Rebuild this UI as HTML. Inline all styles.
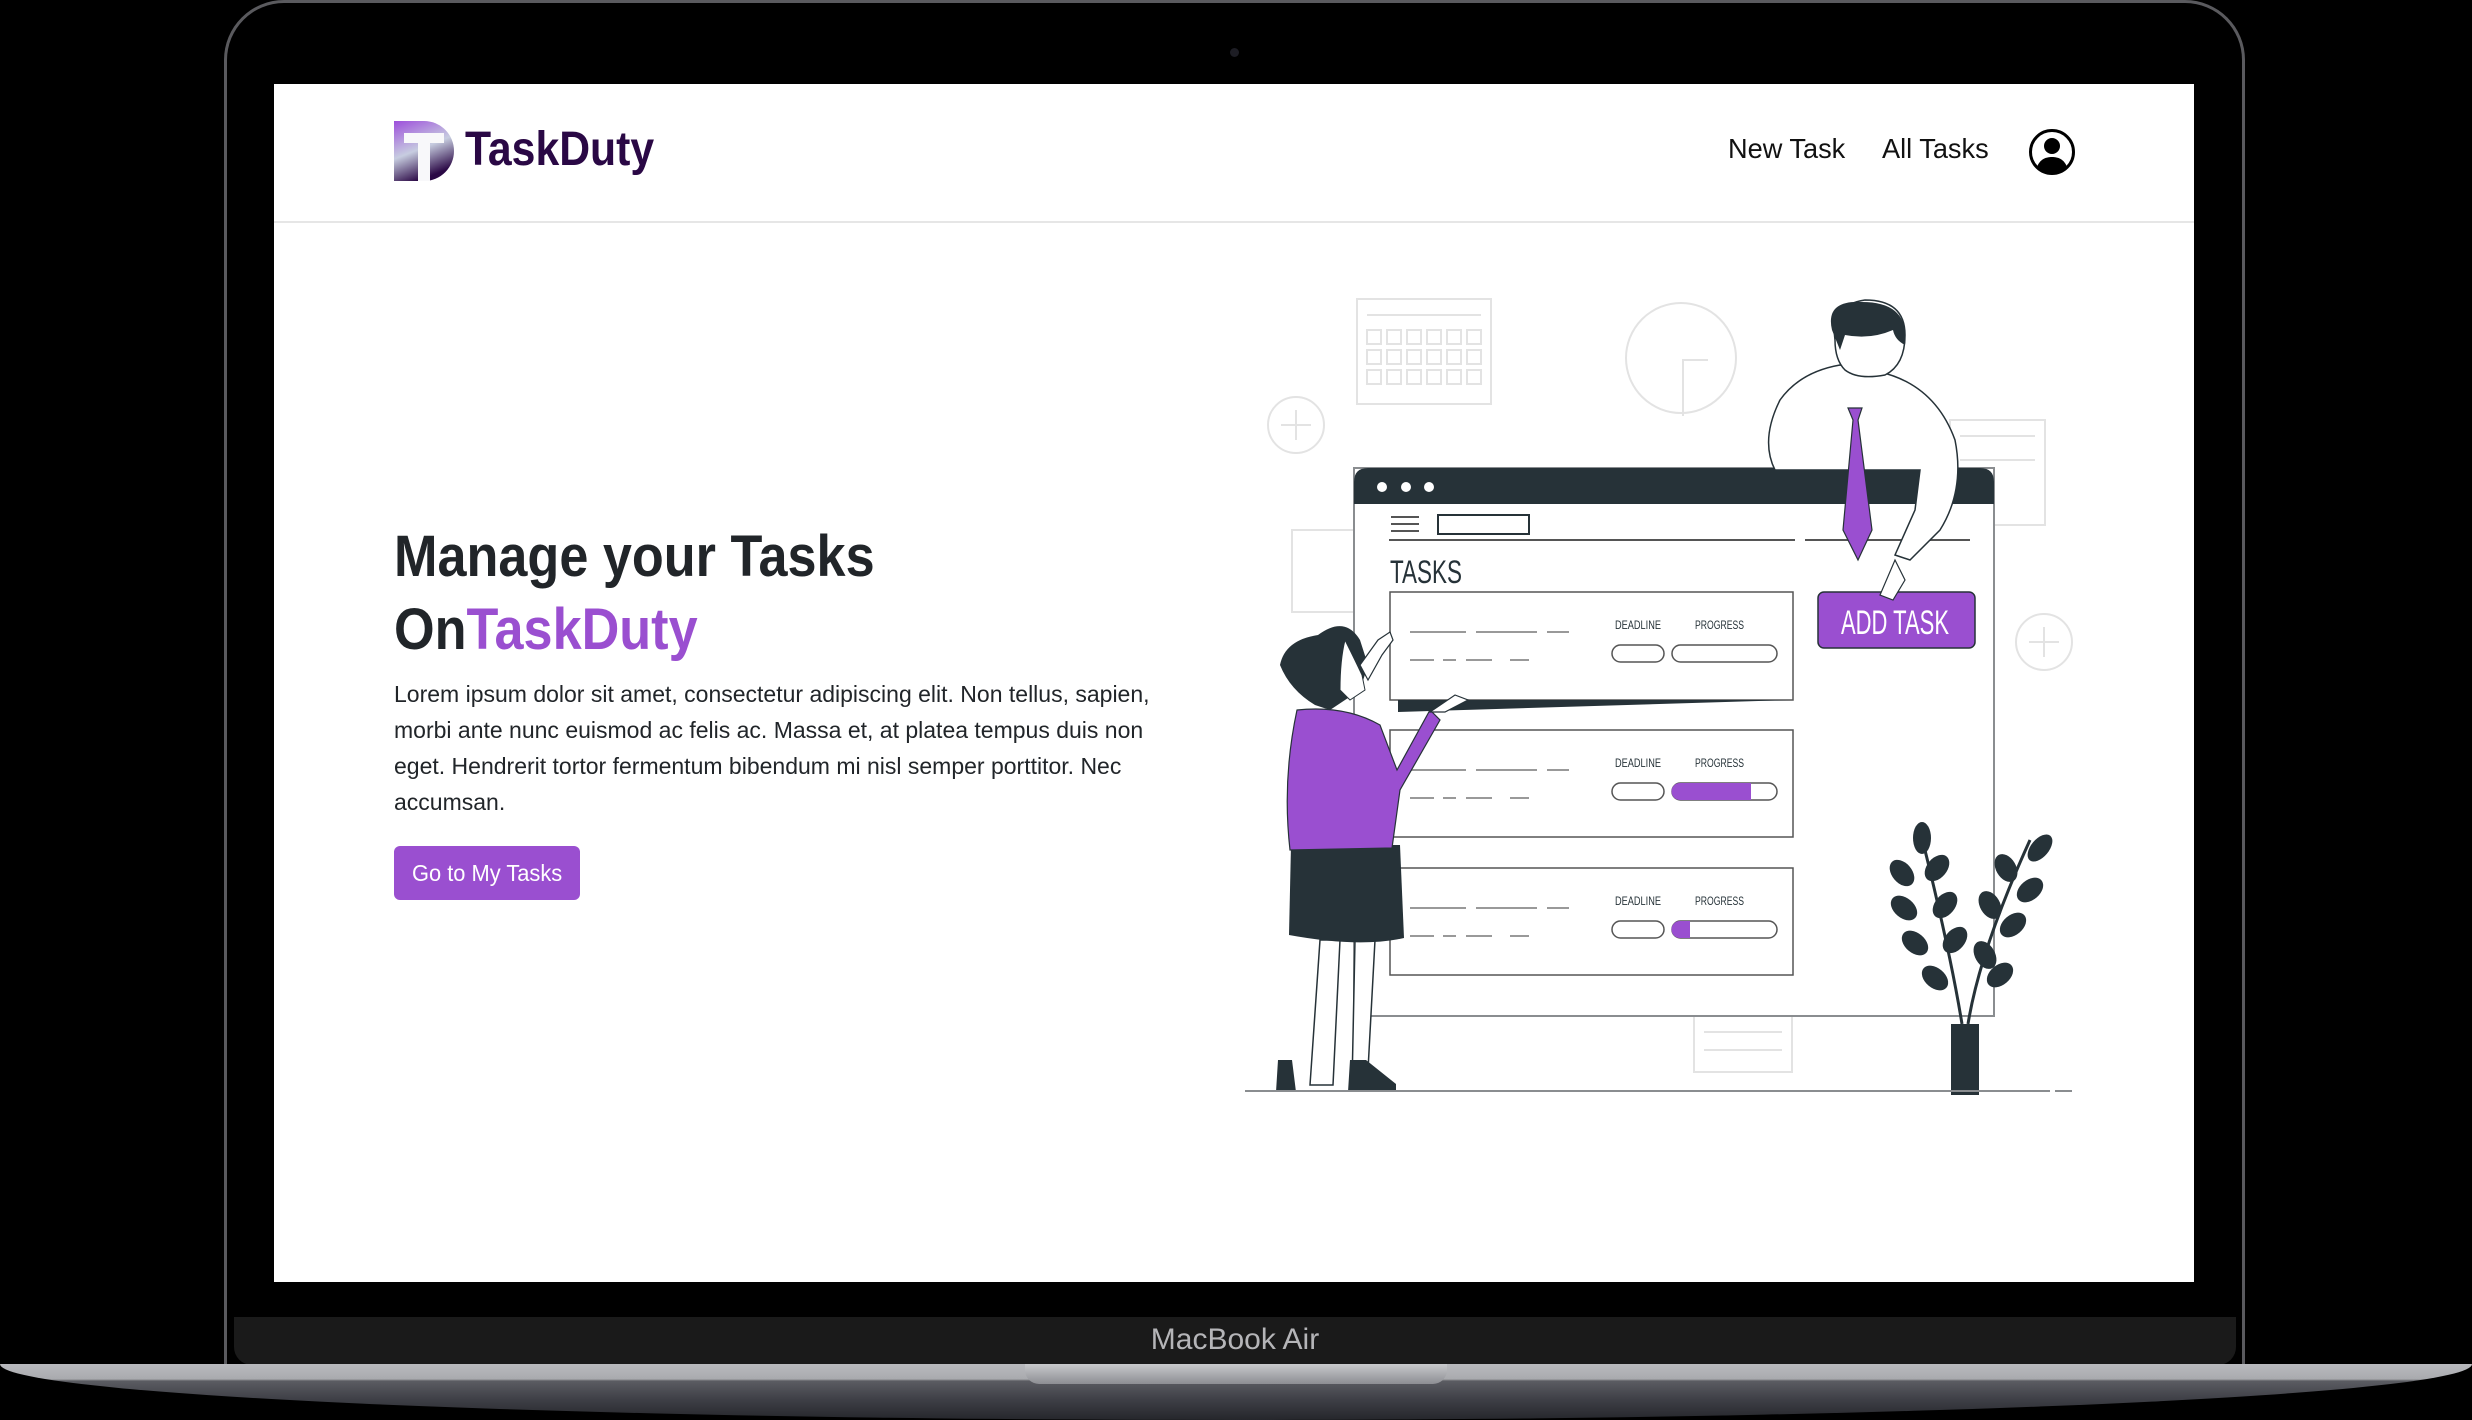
<!DOCTYPE html>
<html><head><meta charset="utf-8">
<style>
*{margin:0;padding:0;box-sizing:border-box}
html,body{width:2472px;height:1420px;background:#000;overflow:hidden;font-family:"Liberation Sans",sans-serif}
.abs{position:absolute}
.shell{left:224px;top:0;width:2021px;height:1366px;border:3px solid #5a5a5e;border-bottom:none;border-radius:60px 60px 0 0;background:#000}
.screen{left:274px;top:84px;width:1920px;height:1198px;background:#fff}
.chin{left:234px;top:1317px;width:2002px;height:48px;background:#1a1a1a;border-radius:0 0 18px 18px}
.base{left:0;top:1364px;width:2472px;height:56px;background:linear-gradient(#b9babe 0,#a9aaae 15px,#5b5c62 17px,#3f4047 35px,#25262b 56px);border-radius:0 0 50% 50%/0 0 100% 100%}
.notch{left:1025px;top:1364px;width:422px;height:20px;background:linear-gradient(#c8c9cc,#8d8e93);border-radius:0 0 14px 14px}
.cond{display:inline-block;transform-origin:left center;white-space:nowrap}
</style></head><body>
<div class="abs shell"></div>
<div class="abs" style="left:1230px;top:48px;width:9px;height:9px;border-radius:50%;background:#1d1d24"></div>
<div class="abs screen">
  <div class="abs" style="left:0;top:137px;width:1920px;height:2px;background:#e6e6e6"></div>
  <svg class="abs" style="left:120px;top:37px" width="60" height="60" viewBox="0 0 60 60">
    <defs><linearGradient id="lg" x1="0" y1="0" x2="0.4" y2="1"><stop offset="0" stop-color="#9d4fdb"/><stop offset="0.55" stop-color="#c7cde0"/><stop offset="1" stop-color="#2a0845"/></linearGradient></defs>
    <path d="M0 0H30A30 30 0 0 1 30 60H0Z" fill="url(#lg)"/>
    <path d="M10 12H50V22H36V60H24V22H10Z" fill="#f8f8fa"/>
  </svg>
  <div class="abs" style="left:191px;top:38px;font-size:48px;font-weight:bold;color:#2a0845"><span class="cond" style="transform:scaleX(0.89)">TaskDuty</span></div>
  <div class="abs" style="left:1454px;top:49px;font-size:28px;color:#111"><span class="cond" style="transform:scaleX(0.97)">New Task</span></div>
  <div class="abs" style="left:1608px;top:49px;font-size:28px;color:#111"><span class="cond" style="transform:scaleX(0.97)">All Tasks</span></div>
  <svg class="abs" style="left:1754px;top:44px" width="48" height="48" viewBox="0 0 48 48">
    <circle cx="24" cy="24" r="21.5" fill="none" stroke="#000" stroke-width="3"/>
    <circle cx="24" cy="18" r="8" fill="#000"/>
    <path d="M9 39C12 31 18 29 24 29S36 31 39 39A21 21 0 0 1 9 39Z" fill="#000"/>
  </svg>
  <div class="abs" style="left:120px;top:436px;font-size:58px;font-weight:bold;color:#212529;line-height:73px">
    <div><span class="cond" style="transform:scaleX(0.9)">Manage your Tasks</span></div>
    <div><span class="cond" style="transform:scaleX(0.9)">On<span style="color:#9a4fd0">TaskDuty</span></span></div>
  </div>
  <div class="abs" style="left:120px;top:592px;font-size:23px;color:#212529;line-height:36px">
    <div><span class="cond" style="transform:scaleX(1.0)">Lorem ipsum dolor sit amet, consectetur adipiscing elit. Non tellus, sapien,</span></div>
    <div><span class="cond" style="transform:scaleX(1.0)">morbi ante nunc euismod ac felis ac. Massa et, at platea tempus duis non</span></div>
    <div><span class="cond" style="transform:scaleX(1.0)">eget. Hendrerit tortor fermentum bibendum mi nisl semper porttitor. Nec</span></div>
    <div><span class="cond" style="transform:scaleX(1.0)">accumsan.</span></div>
  </div>
  <div class="abs" style="left:120px;top:762px;width:186px;height:54px;background:#9a4fd0;border-radius:6px;color:#fff;font-size:23px;line-height:54px;padding-left:18px"><span class="cond" style="transform:scaleX(0.95)">Go to My Tasks</span></div>
</div>

<svg class="abs" style="left:0;top:0" width="2472" height="1420" viewBox="0 0 2472 1420">
 <g fill="none" stroke="#e3e3e3" stroke-width="2">
  <rect x="1357" y="299" width="134" height="105"/>
  <line x1="1367" y1="315" x2="1481" y2="315"/>
  <g>
   <rect x="1367" y="330" width="14" height="14"/><rect x="1387" y="330" width="14" height="14"/><rect x="1407" y="330" width="14" height="14"/><rect x="1427" y="330" width="14" height="14"/><rect x="1447" y="330" width="14" height="14"/><rect x="1467" y="330" width="14" height="14"/>
   <rect x="1367" y="350" width="14" height="14"/><rect x="1387" y="350" width="14" height="14"/><rect x="1407" y="350" width="14" height="14"/><rect x="1427" y="350" width="14" height="14"/><rect x="1447" y="350" width="14" height="14"/><rect x="1467" y="350" width="14" height="14"/>
   <rect x="1367" y="370" width="14" height="14"/><rect x="1387" y="370" width="14" height="14"/><rect x="1407" y="370" width="14" height="14"/><rect x="1427" y="370" width="14" height="14"/><rect x="1447" y="370" width="14" height="14"/><rect x="1467" y="370" width="14" height="14"/>
  </g>
  <circle cx="1681" cy="358" r="55"/>
  <path d="M1683 416V360H1708"/>
  <circle cx="1296" cy="425" r="28"/><path d="M1296 410V440M1281 425H1311"/>
  <circle cx="2044" cy="642" r="28"/><path d="M2044 627V657M2029 642H2059"/>
  <rect x="1950" y="420" width="95" height="105"/>
  <path d="M1960 436H2035M1960 460H2035"/>
  <rect x="1292" y="530" width="64" height="82"/>
  <rect x="1694" y="1016" width="98" height="56"/><line x1="1704" y1="1032" x2="1782" y2="1032"/><line x1="1704" y1="1050" x2="1782" y2="1050"/>
 </g>
 <rect x="1354" y="468" width="640" height="548" fill="#fff" stroke="#8a8d90" stroke-width="2"/>
 <path d="M1354 504V482Q1354 468 1368 468H1980Q1994 468 1994 482V504Z" fill="#263238"/>
 <circle cx="1382" cy="487" r="5" fill="#fff"/><circle cx="1406" cy="487" r="5" fill="#fff"/><circle cx="1429" cy="487" r="5" fill="#fff"/>
 <g stroke="#555" stroke-width="2" fill="none">
  <path d="M1391 517H1419M1391 524H1419M1391 531H1419"/>
  <rect x="1438" y="515" width="91" height="19" stroke="#263238"/>
  <path d="M1389 540H1795M1805 540H1970"/>
 </g>
 <text x="1390" y="583" font-family="Liberation Sans,sans-serif" font-size="32" fill="#263238" textLength="72" lengthAdjust="spacingAndGlyphs">TASKS</text>
 <g font-family="Liberation Sans,sans-serif" font-size="12" fill="#263238">
  <rect x="1390" y="592" width="403" height="108" fill="#fff" stroke="#555" stroke-width="1.5"/>
  <rect x="1390" y="730" width="403" height="107" fill="#fff" stroke="#555" stroke-width="1.5"/>
  <rect x="1390" y="868" width="403" height="107" fill="#fff" stroke="#555" stroke-width="1.5"/>
  <path d="M1398 700L1790 700L1398 712Z" fill="#263238"/>
  <g stroke="#999" stroke-width="2">
   <path d="M1410 632H1466M1476 632H1537M1547 632H1569M1410 660H1434M1443 660H1456M1466 660H1492M1510 660H1529"/>
   <path d="M1410 770H1466M1476 770H1537M1547 770H1569M1410 798H1434M1443 798H1456M1466 798H1492M1510 798H1529"/>
   <path d="M1410 908H1466M1476 908H1537M1547 908H1569M1410 936H1434M1443 936H1456M1466 936H1492M1510 936H1529"/>
  </g>
  <text x="1615" y="629" textLength="46" lengthAdjust="spacingAndGlyphs">DEADLINE</text><text x="1695" y="629" textLength="49" lengthAdjust="spacingAndGlyphs">PROGRESS</text>
  <text x="1615" y="767" textLength="46" lengthAdjust="spacingAndGlyphs">DEADLINE</text><text x="1695" y="767" textLength="49" lengthAdjust="spacingAndGlyphs">PROGRESS</text>
  <text x="1615" y="905" textLength="46" lengthAdjust="spacingAndGlyphs">DEADLINE</text><text x="1695" y="905" textLength="49" lengthAdjust="spacingAndGlyphs">PROGRESS</text>
  <g stroke="#555" stroke-width="1.5" fill="#fff">
   <rect x="1612" y="645" width="52" height="17" rx="8.5"/><rect x="1672" y="645" width="105" height="17" rx="8.5"/>
   <rect x="1612" y="783" width="52" height="17" rx="8.5"/><rect x="1672" y="783" width="105" height="17" rx="8.5"/>
   <rect x="1612" y="921" width="52" height="17" rx="8.5"/><rect x="1672" y="921" width="105" height="17" rx="8.5"/>
  </g>
  <path d="M1680 783H1751V800H1680A8.5 8.5 0 0 1 1680 783Z" fill="#9a4fd0"/>
  <path d="M1680 921H1690V938H1680A8.5 8.5 0 0 1 1680 921Z" fill="#9a4fd0"/>
 </g>
 <rect x="1818" y="592" width="157" height="56" rx="6" fill="#9a4fd0" stroke="#263238" stroke-width="1.5"/>
 <text x="1841" y="634" font-family="Liberation Sans,sans-serif" font-size="34" fill="#fff" textLength="108" lengthAdjust="spacingAndGlyphs">ADD TASK</text>
 <!-- man -->
 <path d="M1775 470Q1760 440 1780 400Q1800 372 1840 365L1880 372Q1935 385 1955 440Q1965 490 1940 530L1910 560L1895 555L1915 510L1920 470Z" fill="#fff" stroke="#263238" stroke-width="1.5"/>
 <path d="M1835 340Q1830 305 1865 300Q1905 300 1905 335Q1905 365 1885 375Q1858 380 1845 370Q1835 360 1835 340Z" fill="#fff" stroke="#263238" stroke-width="1.5"/>
 <path d="M1832 330Q1825 300 1862 302Q1910 302 1905 345Q1895 340 1893 330Q1870 340 1845 335L1840 350Z" fill="#263238"/>
 <path d="M1848 408L1862 408L1858 420L1872 530L1858 560L1843 530L1853 420Z" fill="#9a4fd0" stroke="#263238" stroke-width="1.2"/>
 <path d="M1895 560L1905 580L1893 600L1880 595Z" fill="#fff" stroke="#263238" stroke-width="1.2"/>
 <!-- woman -->
 <path d="M1310 1085L1320 940L1340 940L1333 1085ZM1352 1085L1355 940L1375 940L1368 1070Z" fill="#fff" stroke="#263238" stroke-width="1.5"/>
 <path d="M1278 1060L1292 1060L1296 1092L1276 1092Z" fill="#263238"/>
 <path d="M1350 1060L1366 1060L1396 1084L1396 1092L1348 1092Z" fill="#263238"/>
 <path d="M1291 845L1400 845L1404 938Q1360 948 1289 935Z" fill="#263238"/>
 <path d="M1297 710Q1345 705 1380 725L1397 770L1430 710L1440 720L1400 790L1392 848L1290 850Q1282 780 1297 710Z" fill="#9a4fd0" stroke="#263238" stroke-width="1.2"/>
 <path d="M1318 635Q1345 615 1360 640L1368 665L1360 690L1345 700L1330 710L1315 705Q1290 690 1280 665Q1285 640 1318 635Z" fill="#263238"/>
 <path d="M1345 640Q1355 660 1362 675L1365 690L1350 700L1340 690Q1340 660 1345 640Z" fill="#fff" stroke="#263238" stroke-width="1"/>
 <path d="M1360 665L1378 640L1390 632L1393 640L1382 655L1368 680Z" fill="#fff" stroke="#263238" stroke-width="1.2"/>
 <path d="M1430 712L1455 695L1468 700L1445 712Z" fill="#fff" stroke="#263238" stroke-width="1.2"/>
 <!-- plant -->
 <rect x="1951" y="1024" width="28" height="71" fill="#263238"/>
 <g stroke="#263238" stroke-width="3" fill="none"><path d="M1962 1024Q1950 950 1920 830M1968 1024Q1980 950 2030 840"/></g>
 <g fill="#263238">
  <ellipse cx="1922" cy="838" rx="9" ry="16"/><ellipse cx="1902" cy="873" rx="10" ry="15" transform="rotate(-40 1902 873)"/><ellipse cx="1937" cy="868" rx="10" ry="15" transform="rotate(40 1937 868)"/>
  <ellipse cx="1904" cy="908" rx="10" ry="15" transform="rotate(-50 1904 908)"/><ellipse cx="1945" cy="905" rx="10" ry="15" transform="rotate(40 1945 905)"/>
  <ellipse cx="1915" cy="943" rx="10" ry="15" transform="rotate(-50 1915 943)"/><ellipse cx="1955" cy="940" rx="10" ry="15" transform="rotate(40 1955 940)"/>
  <ellipse cx="1935" cy="978" rx="10" ry="15" transform="rotate(-50 1935 978)"/>
  <ellipse cx="2040" cy="848" rx="9" ry="16" transform="rotate(40 2040 848)"/><ellipse cx="2006" cy="868" rx="10" ry="15" transform="rotate(-30 2006 868)"/><ellipse cx="2030" cy="890" rx="10" ry="15" transform="rotate(50 2030 890)"/>
  <ellipse cx="1990" cy="905" rx="10" ry="15" transform="rotate(-30 1990 905)"/><ellipse cx="2013" cy="925" rx="10" ry="15" transform="rotate(50 2013 925)"/>
  <ellipse cx="1985" cy="955" rx="10" ry="15" transform="rotate(-30 1985 955)"/><ellipse cx="2000" cy="975" rx="10" ry="15" transform="rotate(50 2000 975)"/>
 </g>
 <path d="M1245 1091H2050M2055 1091H2072" stroke="#8a8d90" stroke-width="2"/>
</svg>

<div class="abs chin"></div>
<div class="abs" style="left:1150px;top:1323px;width:170px;text-align:center;font-size:30px;color:#b5b5b8">MacBook Air</div>
<div class="abs base"></div>
<div class="abs notch"></div>
</body></html>
